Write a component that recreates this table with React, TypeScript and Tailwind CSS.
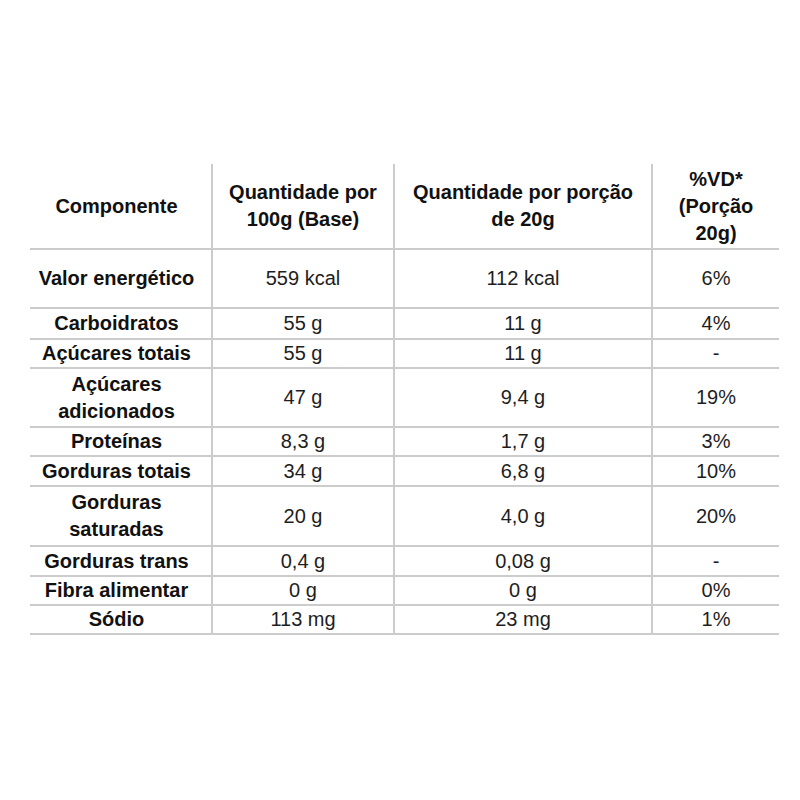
import React from "react";

type Row = { label: React.ReactNode; a: string; b: string; c: string; h: string };

const rows: Row[] = [
  { label: "Valor energético", a: "559 kcal", b: "112 kcal", c: "6%", h: "h-[59px]" },
  { label: "Carboidratos", a: "55 g", b: "11 g", c: "4%", h: "h-[31px]" },
  { label: "Açúcares totais", a: "55 g", b: "11 g", c: "-", h: "h-[29px]" },
  {
    label: (
      <>
        Açúcares
        <br />
        adicionados
      </>
    ),
    a: "47 g",
    b: "9,4 g",
    c: "19%",
    h: "h-[59px]",
  },
  { label: "Proteínas", a: "8,3 g", b: "1,7 g", c: "3%", h: "h-[29px]" },
  { label: "Gorduras totais", a: "34 g", b: "6,8 g", c: "10%", h: "h-[30px]" },
  {
    label: (
      <>
        Gorduras
        <br />
        saturadas
      </>
    ),
    a: "20 g",
    b: "4,0 g",
    c: "20%",
    h: "h-[60px]",
  },
  { label: "Gorduras trans", a: "0,4 g", b: "0,08 g", c: "-", h: "h-[30px]" },
  { label: "Fibra alimentar", a: "0 g", b: "0 g", c: "0%", h: "h-[29px]" },
  { label: "Sódio", a: "113 mg", b: "23 mg", c: "1%", h: "h-[29px]" },
];

const grid = "grid grid-cols-[183px_182px_258px_126px] border-b-2 border-[#cccccc]";
const cell = "flex items-center justify-center text-center border-r-2 border-[#cccccc]";
const lastCell = "flex items-center justify-center text-center";

export default function App() {
  return (
    <div className="w-[800px] h-[800px] bg-white pt-[164px] pl-[30px] text-[20px] leading-[27px] font-['Liberation_Sans',Arial,sans-serif]">
      <div className="w-[749px]">
        <div className={`${grid} h-[86px] font-bold text-[#111111]`}>
          <div className={`${cell} pr-2`}>Componente</div>
          <div className={cell}>
            Quantidade por
            <br />
            100g (Base)
          </div>
          <div className={cell}>
            Quantidade por porção
            <br />
            de 20g
          </div>
          <div className={lastCell}>
            %VD*
            <br />
            (Porção
            <br />
            20g)
          </div>
        </div>
        {rows.map((r, i) => (
          <div key={i} className={`${grid} ${r.h}`}>
            <div className={`${cell} pr-2 font-bold text-[#111111]`}>{r.label}</div>
            <div className={`${cell} text-[#1e1e1e]`}>{r.a}</div>
            <div className={`${cell} text-[#1e1e1e]`}>{r.b}</div>
            <div className={`${lastCell} text-[#1e1e1e]`}>{r.c}</div>
          </div>
        ))}
      </div>
    </div>
  );
}
